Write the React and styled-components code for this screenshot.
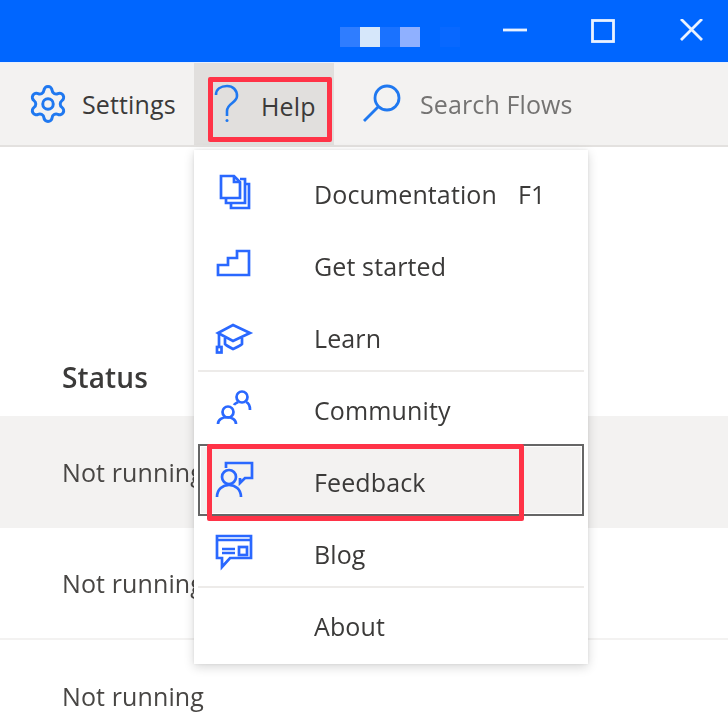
import styled, { createGlobalStyle } from "styled-components";
import { Settings } from "lucide-react";

const GlobalStyle = createGlobalStyle`
	html, body {
		margin: 0;
		padding: 0;
		background: #fff;
	}
	body {
		font-family: "Open Sans", "Noto Sans", sans-serif;
		color: #323130;
		overflow: hidden;
	}
`;

const Page = styled.div`
	position: relative;
	width: 728px;
	height: 714px;
	overflow: hidden;
	filter: blur(0.45px);
	letter-spacing: 0.12px;
`;

const TitleBar = styled.div`
	display: flex;
	align-items: center;
	height: 62px;
	padding: 0 25px 0 340px;
	background: #0066ff;
	border-bottom: 1px solid #e6efff;
	box-sizing: content-box;
`;

const Blocks = styled.div`
	display: flex;
	margin-top: 12px;
`;

const Block = styled.span`
	width: 20px;
	height: 20px;
	background: ${(props) => props.$color};
`;

const WindowControls = styled.div`
	display: flex;
	gap: 64px;
	margin-left: auto;
	svg {
		display: block;
		width: 24px;
		height: 24px;
		fill: none;
		stroke: #eaf2ff;
		stroke-width: 2.8;
	}
`;

const Toolbar = styled.div`
	display: flex;
	height: 82px;
	background: #f3f2f1;
	border-bottom: 2px solid #e3e1df;
`;

const ToolItem = styled.div`
	display: flex;
	align-items: center;
	width: ${(props) => props.$width}px;
	padding-left: ${(props) => props.$pad}px;
	gap: ${(props) => props.$gap}px;
	box-sizing: border-box;
	font-size: 25px;
	color: ${(props) => (props.$muted ? "#747372" : "#3b3a39")};
	background: ${(props) => (props.$active ? "#e1dfdd" : "transparent")};
	svg {
		flex: none;
		overflow: visible;
	}
`;

const HelpLabel = styled.span`
	margin-top: 4px;
`;

const StatusColumn = styled.div`
	padding-top: 212px;
`;

const StatusHeader = styled.div`
	height: 57px;
	padding-left: 62px;
	font-size: 28px;
	font-weight: 600;
	line-height: 36px;
	color: #3b3a39;
`;

const StatusRow = styled.div`
	display: flex;
	align-items: center;
	height: 112px;
	box-sizing: border-box;
	padding-left: 62px;
	font-size: 25px;
	color: #484644;
	background: ${(props) => (props.$active ? "#f3f2f1" : "#fff")};
	border-bottom: ${(props) => (props.$line ? "2px solid #f3f2f1" : "none")};
`;

const Menu = styled.div`
	position: absolute;
	left: 194px;
	top: 150px;
	width: 394px;
	height: 514px;
	box-sizing: border-box;
	padding: 9px 4px 1px;
	background: #fff;
	box-shadow: 0 3px 10px rgba(0, 0, 0, 0.16), 0 0 3px rgba(0, 0, 0, 0.08);
`;

const MenuRow = styled.div`
	position: relative;
	display: flex;
	align-items: center;
	height: 72px;
	font-size: 25px;
	color: #3b3a39;
	&::before {
		content: "";
		display: ${(props) => (props.$selected ? "block" : "none")};
		position: absolute;
		inset: -3px 0 3px;
		background: #f3f2f1;
		border: 2px solid #666;
		box-shadow: inset 0 0 0 1px #fff;
	}
	&::after {
		content: "";
		display: ${(props) => (props.$divider ? "block" : "none")};
		position: absolute;
		left: 0;
		right: 0;
		bottom: 3px;
		height: 2px;
		background: #edebe9;
	}
`;

const MenuIcon = styled.div`
	position: relative;
	flex: none;
	width: 116px;
	padding-left: 16px;
	box-sizing: border-box;
	svg {
		display: block;
		width: 40px;
		height: 40px;
		overflow: visible;
		fill: none;
		stroke: #2a68ff;
		stroke-width: 2.7;
	}
`;

const MenuLabel = styled.span`
	position: relative;
	margin-bottom: 2px;
`;

const Shortcut = styled.span`
	position: relative;
	margin-left: 21px;
	margin-bottom: 2px;
`;

const Callout = styled.div`
	position: absolute;
	left: ${(props) => props.$left}px;
	top: ${(props) => props.$top}px;
	width: ${(props) => props.$w}px;
	height: ${(props) => props.$h}px;
	box-sizing: border-box;
	border: 5px solid #ff3347;
	border-radius: 2px;
`;

const Gear = () => (
	<Settings size={42} color="#1f78f0" strokeWidth={1.7} style={{ marginLeft: -3 }} />
);

const Question = () => (
	<svg width="28" height="44" viewBox="0 0 28 44" fill="none" stroke="#1f78f0" strokeWidth="2.6">
		<path d="M3 13C3 7 8 4 14 4C20 4 24 8 24 14C24 21 14 21 14 29V34" />
		<circle cx="14" cy="38.5" r="1.5" fill="#1f78f0" stroke="none" />
	</svg>
);

const Magnifier = () => (
	<svg width="40" height="42" viewBox="0 0 40 42" fill="none" stroke="#1f78f0" strokeWidth="2.8">
		<circle cx="25" cy="15" r="12" />
		<path d="M16 24L2 38" />
	</svg>
);

const DocsIcon = () => (
	<svg viewBox="0 0 40 40">
		<path d="M7 1H20L26 7V23H7Z" />
		<path d="M20 1V7H26" />
		<path d="M26 4H31V28H12V23" />
		<path d="M31 9H35V33H17V28" />
	</svg>
);

const StairsIcon = () => (
	<svg viewBox="0 0 40 40">
		<path d="M4 28V18H14V11H23V4H35V28Z" />
	</svg>
);

const LearnIcon = () => (
	<svg viewBox="0 0 40 40">
		<path d="M19 6L36 14L19 22L4 14Z" />
		<path d="M11 19V25C13 27 17 29 19 30C21 29 26 27 28 25V19" />
		<path d="M5 15V28" />
		<rect x="3" y="28" width="4.5" height="5.5" />
	</svg>
);

const CommunityIcon = () => (
	<svg viewBox="0 0 40 40">
		<circle cx="28" cy="6" r="5.5" />
		<path d="M20 14C21 12 23 12 24 11" />
		<path d="M32 11C35 12 36 15 36 19" />
		<circle cx="14" cy="21" r="5.5" />
		<path d="M4 33C4 24 22 24 22 33" />
	</svg>
);

const FeedbackIcon = () => (
	<svg viewBox="0 0 40 40">
		<path d="M12 5V0H38V15H31L26 20V15" />
		<circle cx="15" cy="14" r="7" />
		<path d="M3 34C3 18 27 18 27 34" />
	</svg>
);

const BlogIcon = () => (
	<svg viewBox="0 0 40 40">
		<path d="M3 1H37V23H16L8 32V23H3Z" />
		<path d="M3 5H37" />
		<path d="M8 14H21M8 18H21" />
		<rect x="25" y="12" width="8" height="8" />
	</svg>
);

const blocks = ["#2f7dff", "#d6e7fa", "#1a72ff", "#8fb0ff", "#0066ff", "#0868ff"];

const menuItems = [
	{ label: "Documentation", shortcut: "F1", icon: <DocsIcon /> },
	{ label: "Get started", icon: <StairsIcon /> },
	{ label: "Learn", icon: <LearnIcon />, divider: true },
	{ label: "Community", icon: <CommunityIcon /> },
	{ label: "Feedback", icon: <FeedbackIcon />, selected: true },
	{ label: "Blog", icon: <BlogIcon />, divider: true },
	{ label: "About" },
];

export default function App() {
	return (
		<Page>
			<GlobalStyle />
			<TitleBar>
				<Blocks>
					{blocks.map((color, i) => (
						<Block key={i} $color={color} />
					))}
				</Blocks>
				<WindowControls>
					<svg viewBox="0 0 24 24">
						<path d="M0 11H24" />
					</svg>
					<svg viewBox="0 0 24 24">
						<rect x="1.5" y="1.5" width="21" height="21" />
					</svg>
					<svg viewBox="0 0 24 24">
						<path d="M2 0L23 21M23 0L2 21" />
					</svg>
				</WindowControls>
			</TitleBar>
			<Toolbar>
				<ToolItem $width={194} $pad={30} $gap={13}>
					<Gear />
					<span>Settings</span>
				</ToolItem>
				<ToolItem $width={140} $pad={19} $gap={20} $active>
					<Question />
					<HelpLabel>Help</HelpLabel>
				</ToolItem>
				<ToolItem $width={394} $pad={28} $gap={18} $muted>
					<Magnifier />
					<span>Search Flows</span>
				</ToolItem>
			</Toolbar>
			<StatusColumn>
				<StatusHeader>Status</StatusHeader>
				<StatusRow $active>Not running</StatusRow>
				<StatusRow $line>Not running</StatusRow>
				<StatusRow>Not running</StatusRow>
			</StatusColumn>
			<Menu>
				{menuItems.map((item) => (
					<MenuRow key={item.label} $divider={item.divider} $selected={item.selected}>
						<MenuIcon>{item.icon}</MenuIcon>
						<MenuLabel>{item.label}</MenuLabel>
						{item.shortcut && <Shortcut>{item.shortcut}</Shortcut>}
					</MenuRow>
				))}
			</Menu>
			<Callout $left={208} $top={77} $w={124} $h={65} />
			<Callout $left={207} $top={444} $w={317} $h={77} />
		</Page>
	);
}
